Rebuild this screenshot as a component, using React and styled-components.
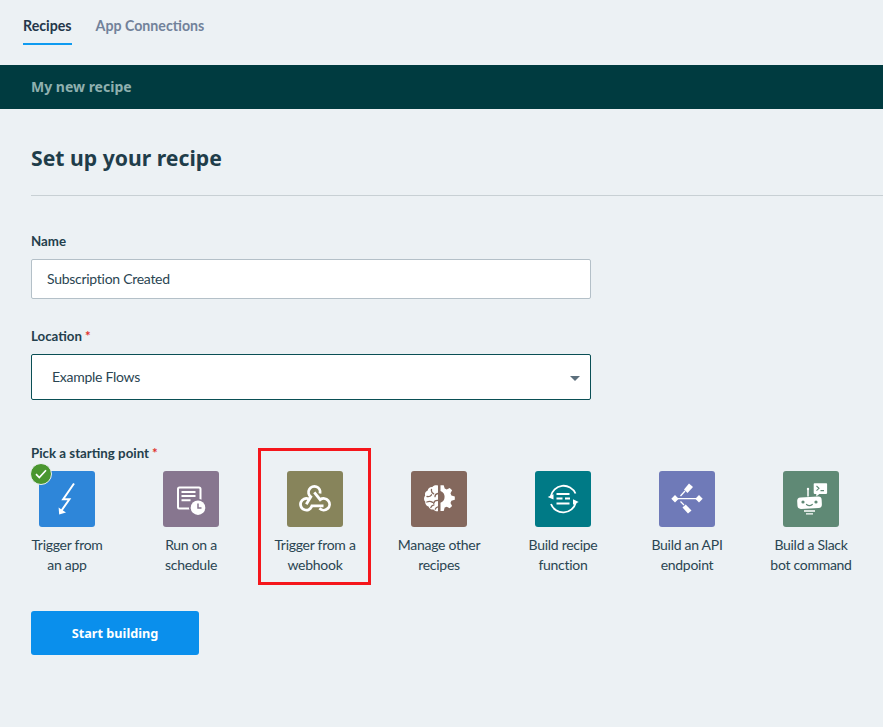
import React from "react";
import styled, { createGlobalStyle } from "styled-components";

const GlobalStyle = createGlobalStyle`
  html, body { margin: 0; padding: 0; background: #ecf1f4; }
  body { font-family: "Lato", "Noto Sans", sans-serif; color: #1f3d4a; overflow: hidden; }
  * { box-sizing: border-box; }
`;

const BoltIcon = () => (
  <svg width="56" height="56" viewBox="0 0 56 56" fill="none">
    <path d="M35 12.5 24.2 28.2h6.2L21.5 41" stroke="#fff" strokeWidth="2" />
    <path d="M19.6 36.5 20.2 43.4 27 41.6Z" fill="#fff" />
  </svg>
);

const ScheduleIcon = ({ bg }) => (
  <svg width="56" height="56" viewBox="0 0 56 56" fill="none">
    <rect x="15" y="16.5" width="22.5" height="21" rx="1.5" stroke="#fff" strokeWidth="2" />
    <path d="M18.5 21h14M18.5 25h14M18.5 29.3h9" stroke="#fff" strokeWidth="2" />
    <circle cx="35" cy="36.7" r="9" fill={bg} />
    <circle cx="35" cy="36.7" r="7.3" fill="#fff" />
    <path d="M35 32.5v4.5h3.5" stroke={bg} strokeWidth="1.5" />
  </svg>
);

const WebhookIcon = () => (
  <svg width="56" height="56" viewBox="0 0 56 56" fill="none" stroke="#fff" strokeWidth="2.8">
    <path d="M33 22.5A5.8 5.8 0 1 0 23.8 25.8L19.3 33.3" />
    <path d="M21.5 27.9A5.8 5.8 0 1 0 24.9 34.9H36.5" />
    <path d="M32.5 37.3A5.8 5.8 0 1 0 33.2 28.7L27.3 21.3" />
  </svg>
);

const BrainGearIcon = ({ bg }) => (
  <svg width="56" height="56" viewBox="0 0 56 56" fill="none">
    <path
      d="M27 14.5c-2.4-.7-4.6 0-5.6 1.5-2.4-.2-4.3 1.2-4.7 3.4-2.2.9-3.2 3-2.5 5.2-1.6 1.8-1.6 4.5.1 6.2-.4 2.3 1 4.2 3.2 4.7.7 2.2 2.8 3.4 4.9 3 1.3 1.5 3 2.1 4.6 1.7Z"
      fill="#fff"
    />
    <path
      d="M16 25.5c2 .4 3.5-.2 4.5-1.7M20.5 18.5c-.4 2 .5 3.5 2.2 4.3M27 22.5c-2 .2-3 1.5-3 3.2M15.8 31c2-.8 4-.8 5.8.4M27 29.5c-2.3-.2-3.8.8-4.3 2.8M19.8 36.5c.6-1.5 1.7-2.3 3.2-2.6M27 35.8c-1.3.2-2.3 1-2.7 2.4"
      stroke={bg}
      strokeWidth="1.3"
      strokeLinecap="round"
    />
    <path
      d="M29.5 14.3h3.200l1 3.300 2 .9 3-1.600 2.400 2.400-1.600 3 .9 2.100 3.400 1v3.400l-3.400 1-.9 2.100 1.600 3-2.400 2.400-3-1.600-2 .9-1 3.300h-3.200v-8.200a6.300 6.300 0 0 0 0-11.800Z"
      fill="#fff"
    />
  </svg>
);

const FunctionIcon = () => (
  <svg width="56" height="56" viewBox="0 0 56 56" fill="none">
    <path d="M15.8 25.5A13 13 0 0 1 40.5 22.5" stroke="#fff" strokeWidth="1.8" />
    <path d="M40.8 31.5A13 13 0 0 1 16 33" stroke="#fff" strokeWidth="1.8" />
    <path d="M12.7 26 18.5 23.3V28.5Z" fill="#fff" />
    <path d="M43.7 31 38 28.3V33.7Z" fill="#fff" />
    <path d="M21.5 23h13M21.5 27.500h6M30 27.500h5M21.5 32.500h13" stroke="#fff" strokeWidth="1.8" />
  </svg>
);

const ApiIcon = () => (
  <svg width="56" height="56" viewBox="0 0 56 56" fill="none">
    <path d="M12.3 27.7 16 24l3.7 3.7L16 31.4ZM36.3 27.7 40 24l3.7 3.7L40 31.4Z" fill="#fff" />
    <path d="M18 27.7h20M21.5 25 26 20M21.5 30.5 25 34" stroke="#fff" strokeWidth="1.3" />
    <path d="M25 18.5 30 12.5 34 16 28.500 22Z" fill="#fff" />
    <path d="M23.500 36.500 26.700 33.500 32.500 39.500 29 42.500Z" fill="#fff" />
  </svg>
);

const BotIcon = ({ bg }) => (
  <svg width="56" height="56" viewBox="0 0 56 56" fill="none">
    <path d="M25 25.5V18.5" stroke="#fff" strokeWidth="1.5" />
    <circle cx="25" cy="18" r="1.2" fill="#fff" />
    <rect x="14.3" y="26" width="24.5" height="11.5" rx="3.5" fill="#fff" transform="rotate(-3 26 32)" />
    <circle cx="20" cy="31" r="1.6" fill={bg} />
    <circle cx="33" cy="31" r="1.6" fill={bg} />
    <path d="M23.5 33.5c1.8 1.500 4 1.500 5.800 0" stroke={bg} strokeWidth="1.2" strokeLinecap="round" />
    <path d="M21 40h11M23 42.800h7" stroke="#fff" strokeWidth="1.3" />
    <path d="M31.500 12.300h11.800a.8.800 0 0 1 .8.800v9a.8.800 0 0 1-.8.800h-7l-3 2.500v-2.500h-1.800a.8.800 0 0 1-.8-.8v-9a.8.800 0 0 1 .8-.8Z" fill="#fff" />
    <path d="M33.500 15l2.500 2.300-2.500 2.300M37.500 19.600h3.500" stroke={bg} strokeWidth="1.1" />
  </svg>
);

const tiles = [
  { lines: ["Trigger from", "an app"], bg: "#2e86d9", Icon: BoltIcon, done: true },
  { lines: ["Run on a", "schedule"], bg: "#87768f", Icon: ScheduleIcon },
  { lines: ["Trigger from a", "webhook"], bg: "#87845b", Icon: WebhookIcon, marked: true },
  { lines: ["Manage other", "recipes"], bg: "#84685d", Icon: BrainGearIcon },
  { lines: ["Build recipe", "function"], bg: "#007a86", Icon: FunctionIcon },
  { lines: ["Build an API", "endpoint"], bg: "#6f7ab8", Icon: ApiIcon },
  { lines: ["Build a Slack", "bot command"], bg: "#5f8975", Icon: BotIcon },
];

const App = () => {
  return (
    <>
      <GlobalStyle />
      <Tabs>
        <Tab $active>Recipes</Tab>
        <Tab>App Connections</Tab>
      </Tabs>
      <Banner>My new recipe</Banner>
      <Main>
        <Heading>Set up your recipe</Heading>
        <Divider />
        <Form>
          <Label>Name</Label>
          <TextField>Subscription Created</TextField>
          <Label $gap="27px">
            Location<Star>*</Star>
          </Label>
          <SelectField>
            Example Flows
            <Caret />
          </SelectField>
          <Label $gap="43px">
            Pick a starting point<Star>*</Star>
          </Label>
        </Form>
        <TileRow>
          {tiles.map(({ lines, bg, Icon, done, marked }) => (
            <Tile key={lines[0]}>
              {marked && <Highlight />}
              <IconBox $bg={bg}>
                {done && (
                  <CheckBadge>
                    <svg width="12" height="10" viewBox="0 0 12 10" fill="none">
                      <path d="M1 5.2 4.3 8.5 11 1.2" stroke="#fff" strokeWidth="1.7" />
                    </svg>
                  </CheckBadge>
                )}
                <Icon bg={bg} />
              </IconBox>
              <TileLabel>
                {lines[0]}
                <br />
                {lines[1]}
              </TileLabel>
            </Tile>
          ))}
        </TileRow>
        <StartButton>Start building</StartButton>
      </Main>
    </>
  );
};

export default App;

const Tabs = styled.nav`
  display: flex;
  gap: 24px;
  height: 65px;
  padding: 16px 0 0 23px;
`;

const Tab = styled.div`
  height: 29px;
  font-size: 14.2px;
  line-height: 20px;
  font-weight: 700;
  color: ${({ $active }) => ($active ? "#24364a" : "#72829a")};
  border-bottom: 2px solid ${({ $active }) => ($active ? "#0f9bf0" : "transparent")};
`;

const Banner = styled.div`
  height: 44px;
  padding-left: 31px;
  background: #003b40;
  color: #8fb0af;
  font-family: "Noto Sans", sans-serif;
  font-size: 14px;
  font-weight: 700;
  line-height: 44px;
`;

const Main = styled.main`
  padding: 33px 0 0 31px;
`;

const Heading = styled.h1`
  margin: 0;
  height: 53px;
  font-family: "Noto Sans", sans-serif;
  font-size: 21.2px;
  line-height: 32px;
  font-weight: 700;
  color: #1f3d4a;
`;

const Divider = styled.hr`
  margin: 0;
  border: 0;
  height: 1px;
  background: #c8d0d4;
`;

const Form = styled.div`
  width: 560px;
  padding-top: 35px;
`;

const Label = styled.div`
  height: 20px;
  margin-top: ${({ $gap }) => $gap || "0"};
  margin-bottom: 8px;
  font-size: 13.3px;
  line-height: 20px;
  font-weight: 700;
  color: #24404c;
`;

const Star = styled.span`
  margin-left: 3px;
  color: #e0302b;
`;

const TextField = styled.div`
  height: 40px;
  padding-left: 15px;
  background: #fff;
  border: 1px solid #b4c0c8;
  border-radius: 2px;
  font-size: 14px;
  letter-spacing: -0.28px;
  line-height: 38px;
  color: #2a4552;
`;

const SelectField = styled.div`
  position: relative;
  height: 46px;
  padding-left: 20px;
  background: #fff;
  border: 1px solid #0a4f55;
  border-radius: 2px;
  font-size: 14px;
  letter-spacing: -0.28px;
  line-height: 44px;
  color: #2a4552;
`;

const Caret = styled.span`
  position: absolute;
  right: 10px;
  top: 21px;
  border-left: 5px solid transparent;
  border-right: 5px solid transparent;
  border-top: 5px solid #5c6f7c;
`;

const TileRow = styled.div`
  display: flex;
  margin-left: -26px;
`;

const Tile = styled.div`
  position: relative;
  display: flex;
  flex-direction: column;
  align-items: center;
  width: 124px;
`;

const Highlight = styled.div`
  position: absolute;
  left: 5px;
  top: -23px;
  width: 113px;
  height: 137px;
  border: 3px solid #f5161b;
`;

const IconBox = styled.div`
  position: relative;
  width: 56px;
  height: 56px;
  border-radius: 3px;
  background: ${({ $bg }) => $bg};
  svg { display: block; }
`;

const CheckBadge = styled.span`
  position: absolute;
  left: -9px;
  top: -8px;
  display: flex;
  align-items: center;
  justify-content: center;
  width: 22px;
  height: 22px;
  border-radius: 50%;
  background: #4a962f;
  border: 1px solid #ecf1f4;
`;

const TileLabel = styled.div`
  margin-top: 8px;
  font-size: 14px;
  letter-spacing: -0.28px;
  line-height: 20px;
  text-align: center;
  color: #2a4552;
`;

const StartButton = styled.button`
  display: block;
  width: 168px;
  height: 44px;
  margin-top: 36px;
  border: 0;
  border-radius: 3px;
  background: #0a8fec;
  color: #fff;
  font-family: "Noto Sans", sans-serif;
  font-size: 12.7px;
  font-weight: 700;
`;
